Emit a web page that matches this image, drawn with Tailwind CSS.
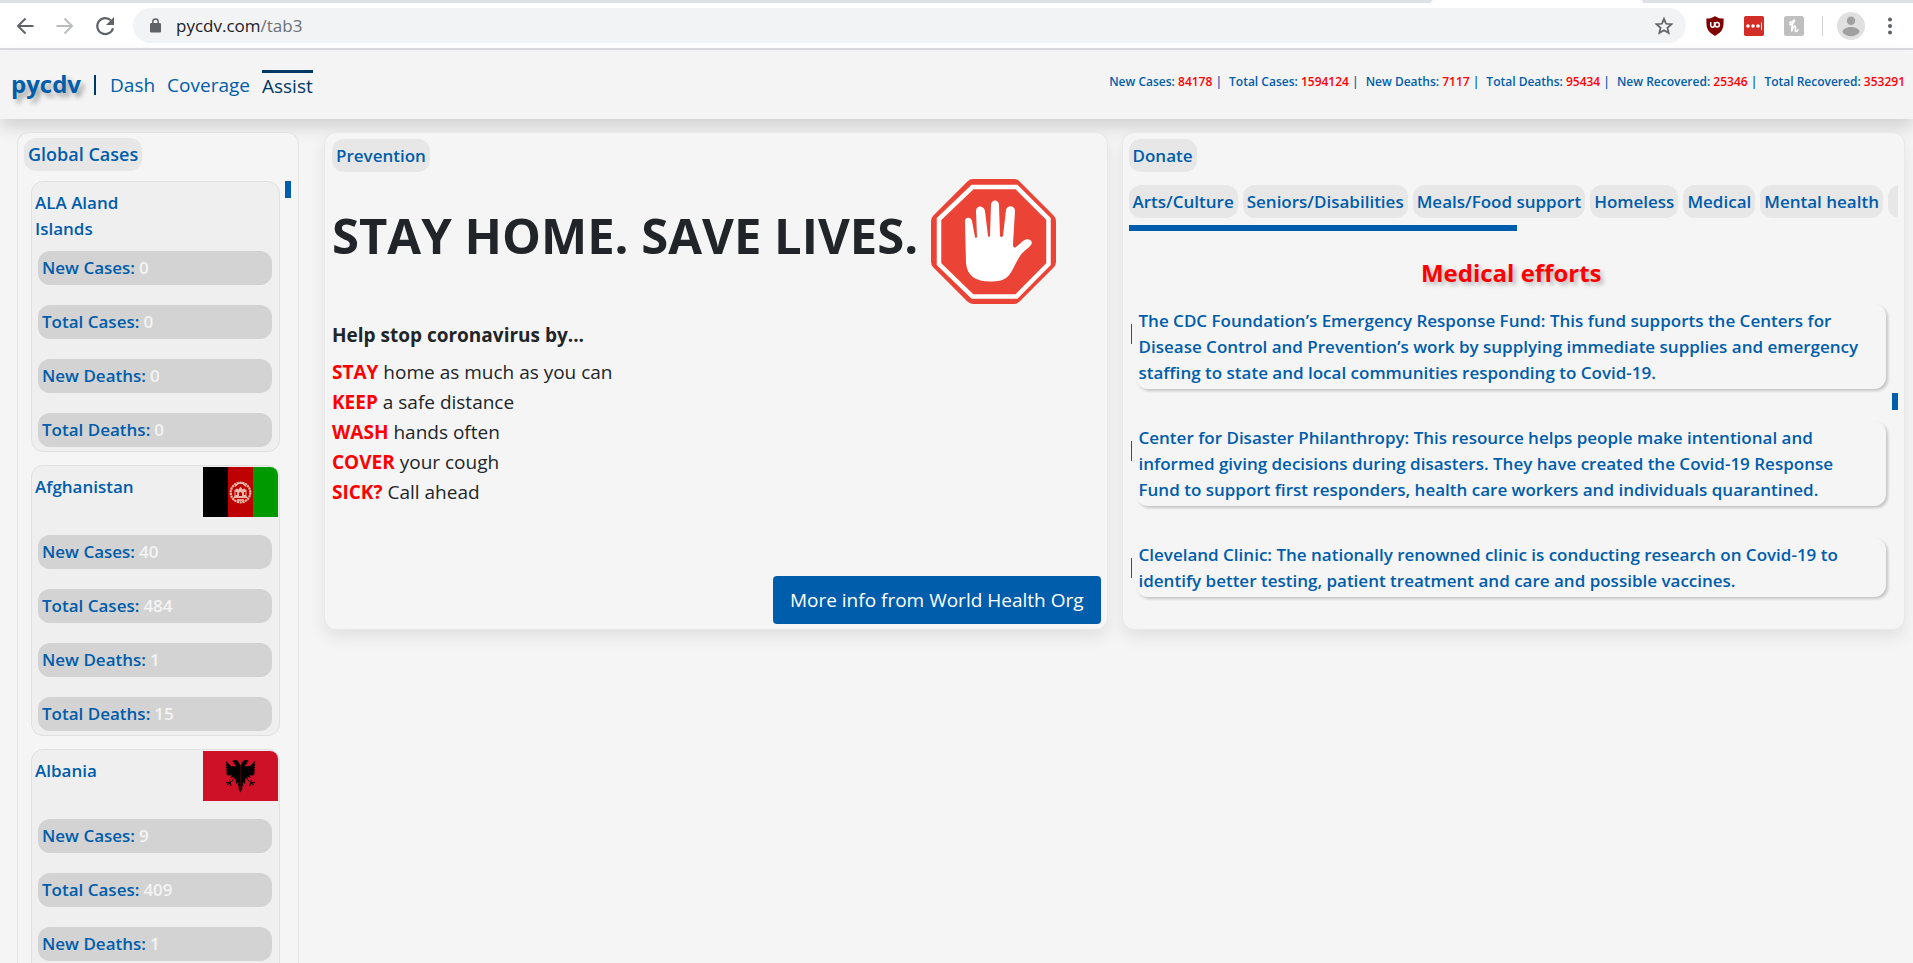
<!DOCTYPE html>
<html lang="en">
<head>
<meta charset="utf-8">
<title>pycdv</title>
<script src="https://cdn.jsdelivr.net/npm/@tailwindcss/browser@4"></script>
</head>
<body class="flex h-screen flex-col overflow-hidden bg-[#f5f5f5] font-['Open_Sans',sans-serif] text-[#212529]">

<!-- Browser toolbar -->
<div class="shrink-0 border-b-2 border-[#dadce0] bg-white">
  <div class="flex h-[3px] bg-[#dee1e6]"><div class="ml-auto mr-[270px] h-[3px] w-[212px] rounded-t-sm bg-white"></div></div>
  <div class="flex h-[45px] items-center">
    <div class="flex w-[133px] shrink-0 items-center gap-4 pl-[13px]">
      <button aria-label="Back"><svg class="size-6" viewBox="0 0 24 24" fill="none" stroke="#5f6368" stroke-width="2"><path d="M20.500 12H5.500M12.500 4.500L5 12l7.500 7.500"/></svg></button>
      <button aria-label="Forward"><svg class="size-6" viewBox="0 0 24 24" fill="none" stroke="#babcbe" stroke-width="2"><path d="M3.500 12h15M11.500 4.500L19 12l-7.500 7.500"/></svg></button>
      <button aria-label="Reload"><svg class="size-6" viewBox="0 0 24 24"><path d="M17.800 6.300A8 8 0 1 0 20 14.200" fill="none" stroke="#5f6368" stroke-width="2.200"/><path d="M21 3v8h-8z" fill="#5f6368"/></svg></button>
    </div>
    <div class="flex h-[35px] grow items-center rounded-full bg-[#f1f3f4] pl-[17px] pr-[12px]">
      <svg class="h-[15px] w-[11px] shrink-0" viewBox="0 0 11 15"><rect x="0" y="5" width="11" height="9.500" rx="1.300" fill="#5f6368"/><path d="M2.800 6V3.600a2.700 2.700 0 0 1 5.400 0V6" fill="none" stroke="#5f6368" stroke-width="1.500"/></svg>
      <div role="textbox" aria-label="Address" class="ml-[15px] grow text-[17px] text-[#202124]">pycdv.com<span class="text-[#6b6f74]">/tab3</span></div>
      <button aria-label="Bookmark"><svg class="size-5" viewBox="0 0 20 20" fill="none" stroke="#5f6368" stroke-width="1.700"><path d="M10 2.800l2.100 5 5.400.45-4.100 3.500 1.250 5.300L10 14.200l-4.650 2.850L6.600 11.750 2.500 8.250l5.400-.45z"/></svg></button>
    </div>
    <div class="flex w-[227px] shrink-0 items-center pl-[20px]">
      <svg class="h-5 w-[18px]" viewBox="0 0 18 20"><path d="M9 0l1 .7C12 2 14.500 2.600 17.600 2.600 17.700 12 17.500 15 9 20 .500 15 .300 12 .400 2.600 3.500 2.600 6 2 8 .700z" fill="#800000"/><path d="M4.700 6v3.300a1.900 1.900 0 0 0 3.800 0V6M8.500 9" fill="none" stroke="#fff" stroke-width="1.500"/><circle cx="11.200" cy="8.700" r="2.200" fill="none" stroke="#fff" stroke-width="1.500"/></svg>
      <svg class="ml-[20px] size-5" viewBox="0 0 20 20"><rect width="20" height="20" rx="1.800" fill="#d32d27"/><g fill="#fff"><circle cx="4" cy="10" r="1.800"/><circle cx="9" cy="10" r="1.800"/><circle cx="14" cy="10" r="1.800"/><rect x="17" y="6.500" width="1" height="7.500"/></g></svg>
      <svg class="ml-[20px] size-5" viewBox="0 0 20 20"><rect width="20" height="20" rx="2.500" fill="#bfbfbf"/><path d="M6 8.800C8.500 8 11.300 5.500 10.300 4.300 8.900 3.500 7.800 8 7.800 15.500 8.300 12 9.500 10 10.800 10.200c1.700.4-.5 5.300 1.200 5.300 1 0 1.500-.8 1.900-1.500M5.800 6.800l1.200-1" fill="none" stroke="#fff" stroke-width="1.700" stroke-linecap="round"/></svg>
      <div class="ml-[18px] h-5 w-px bg-[#cfd1d4]"></div>
      <svg class="ml-[14px] size-[28px]" viewBox="0 0 28 28"><circle cx="14" cy="14" r="14" fill="#e0e0e0"/><circle cx="14" cy="8.700" r="4.200" fill="#a0a0a0"/><path d="M5.500 20c0-3.500 5-5 8.500-5s8.500 1.500 8.500 5c-1.500 2.700-5 4.200-8.500 4.200S7 22.700 5.500 20z" fill="#a0a0a0"/></svg>
      <button aria-label="Menu" class="ml-[23px]"><svg class="h-[18px] w-1" viewBox="0 0 4 18" fill="#5f6368"><circle cx="2" cy="2.500" r="2"/><circle cx="2" cy="9" r="2"/><circle cx="2" cy="15.500" r="2"/></svg></button>
    </div>
  </div>
</div>

<!-- Site header -->
<header class="flex h-[69px] shrink-0 items-center justify-between bg-[#f4f4f4] pl-[11px] pr-2 shadow-[0_8px_16px_rgba(0,0,0,0.15)]">
  <nav class="flex items-center text-[19px] leading-[26px] text-[#005dab]">
    <a href="#" class="pb-[2px] text-[24px] font-bold [text-shadow:4px_4px_5px_rgba(0,0,0,0.35)]">pycdv</a>
    <span class="ml-[13px] h-5 w-[2px] bg-[#003865]"></span>
    <a href="#" class="ml-[14px]">Dash</a>
    <a href="#" class="ml-[12px]">Coverage</a>
    <a href="#" class="ml-[12px] border-t-3 border-[#003865] text-[#003865]">Assist</a>
  </nav>
  <p class="flex gap-[7px] pb-[6px] text-[12px] font-semibold text-[#005dab]">
    <span>New Cases: <b class="font-semibold text-[#ff0000]">84178</b> |</span>
    <span>Total Cases: <b class="font-semibold text-[#ff0000]">1594124</b> |</span>
    <span>New Deaths: <b class="font-semibold text-[#ff0000]">7117</b> |</span>
    <span>Total Deaths: <b class="font-semibold text-[#ff0000]">95434</b> |</span>
    <span>New Recovered: <b class="font-semibold text-[#ff0000]">25346</b> |</span>
    <span>Total Recovered: <b class="font-semibold text-[#ff0000]">353291</b></span>
  </p>
</header>

<main class="flex min-h-0 grow items-start pl-[17px] pr-2 pt-[13px]">

  <!-- Country list -->
  <aside class="mr-[25px] flex h-full w-[282px] shrink-0 flex-col overflow-hidden rounded-t-xl border border-b-0 border-[#e3e3e3] bg-[#f5f5f5] pl-[6px] pt-[5px] font-semibold text-[#005dab]">
    <h2 class="flex h-[33px] shrink-0 items-center self-start rounded-xl bg-[#e7e7e7] px-1 text-[18px]">Global Cases</h2>
    <div class="mt-[10px] flex min-h-0 grow items-start gap-[5px] pl-[7px] text-[17px]">
      <div class="flex w-[249px] flex-col gap-[13px]">
        <section class="h-[271px] rounded-xl border border-[#e0e0e0] bg-[#efefef]">
          <div class="flex h-[69px] justify-between pl-[3px]"><h3 class="w-[110px] pt-2 leading-[26px]">ALA Aland Islands</h3></div>
          <ul class="flex flex-col gap-5 pl-[6px] pr-[7px]">
            <li class="flex h-[34px] items-center gap-1 rounded-xl bg-[#d3d3d3] px-1">New Cases: <span class="text-[#f4f4f4]">0</span></li>
            <li class="flex h-[34px] items-center gap-1 rounded-xl bg-[#d3d3d3] px-1">Total Cases: <span class="text-[#f4f4f4]">0</span></li>
            <li class="flex h-[34px] items-center gap-1 rounded-xl bg-[#d3d3d3] px-1">New Deaths: <span class="text-[#f4f4f4]">0</span></li>
            <li class="flex h-[34px] items-center gap-1 rounded-xl bg-[#d3d3d3] px-1">Total Deaths: <span class="text-[#f4f4f4]">0</span></li>
          </ul>
        </section>
        <section class="h-[271px] rounded-xl border border-[#e0e0e0] bg-[#efefef]">
          <div class="flex h-[69px] justify-between pl-[3px] pr-px pt-px"><h3 class="pt-[7px] leading-[26px]">Afghanistan</h3>
            <svg class="h-[50px] w-[75px] rounded-tr-lg" viewBox="0 0 75 50"><path fill="#000" d="M0 0h25v50H0z"/><path fill="#bf0000" d="M25 0h25v50H25z"/><path fill="#009900" d="M50 0h25v50H50z"/><circle cx="37.500" cy="25.500" r="9.800" fill="none" stroke="#e9b9a8" stroke-width="2.200" stroke-dasharray="2.200 .6"/><path d="M32 19.500q5.500-7 11 0" fill="none" stroke="#f0d0c4" stroke-width="1.200"/><path d="M31.500 29v-6l2.500-1.500 1.500 1q2-5 4 0l1.500-1 2.500 1.500v6l1.500 2h-15z" fill="#e8b7a8"/><path d="M36 29v-3q1.500-2 3 0v3zM32.500 25h1.500v3h-1.500zM41 25h1.500v3H41z" fill="#bf0000"/><path d="M34 33h7" stroke="#f0d0c4" stroke-width="1.500"/></svg></div>
          <ul class="flex flex-col gap-5 pl-[6px] pr-[7px]">
            <li class="flex h-[34px] items-center gap-1 rounded-xl bg-[#d3d3d3] px-1">New Cases: <span class="text-[#f4f4f4]">40</span></li>
            <li class="flex h-[34px] items-center gap-1 rounded-xl bg-[#d3d3d3] px-1">Total Cases: <span class="text-[#f4f4f4]">484</span></li>
            <li class="flex h-[34px] items-center gap-1 rounded-xl bg-[#d3d3d3] px-1">New Deaths: <span class="text-[#f4f4f4]">1</span></li>
            <li class="flex h-[34px] items-center gap-1 rounded-xl bg-[#d3d3d3] px-1">Total Deaths: <span class="text-[#f4f4f4]">15</span></li>
          </ul>
        </section>
        <section class="h-[271px] rounded-xl border border-[#e0e0e0] bg-[#efefef]">
          <div class="flex h-[69px] justify-between pl-[3px] pr-px pt-px"><h3 class="pt-[7px] leading-[26px]">Albania</h3>
            <svg class="h-[50px] w-[75px] rounded-tr-lg" viewBox="0 0 75 50"><path fill="#ce1126" d="M0 0h75v50H0z"/><g id="eagle-half"><path d="M37.500 14.500L35 10c-1.500-1.500-4-1.200-6 .3l3 1-2 1.200c2 .2 3 1 3 3L28 15l-5-5 .5 3.500h-1l1.500 2.500h-1.500l2 2.300h-2l2 2.200h-2l2.500 2h-2.500l3 2 3.500-.2-2 2.700 4-1.500-1.500 3 3-1.500L33 33l2.500-2-1 4.500 1.500-1-.5 3 2 4z"/><path d="M31 28l-4 4-4-.5M26.500 29l1 3 .5 3M24 34l3-2" fill="none" stroke="#000" stroke-width="1"/></g><use href="#eagle-half" transform="matrix(-1 0 0 1 75 0)"/></svg></div>
          <ul class="flex flex-col gap-5 pl-[6px] pr-[7px]">
            <li class="flex h-[34px] items-center gap-1 rounded-xl bg-[#d3d3d3] px-1">New Cases: <span class="text-[#f4f4f4]">9</span></li>
            <li class="flex h-[34px] items-center gap-1 rounded-xl bg-[#d3d3d3] px-1">Total Cases: <span class="text-[#f4f4f4]">409</span></li>
            <li class="flex h-[34px] items-center gap-1 rounded-xl bg-[#d3d3d3] px-1">New Deaths: <span class="text-[#f4f4f4]">1</span></li>
          </ul>
        </section>
      </div>
      <div class="h-[17px] w-[6px] bg-[#005dab]"></div>
    </div>
  </aside>

  <div class="grid grow grid-cols-2 gap-[14px]">
    <!-- Prevention -->
    <section class="flex min-w-0 flex-col rounded-xl border border-[#e8e8e8] bg-[#f5f5f5] px-[6px] pb-[5px] pt-[6px] pl-[7px] shadow-[0_8px_16px_rgba(0,0,0,0.08)]">
      <h2 class="flex h-[33px] items-center self-start rounded-xl bg-[#e7e7e7] px-1 text-[17px] font-semibold text-[#005dab]">Prevention</h2>
      <div class="mt-[7px] flex items-center gap-[13px] whitespace-nowrap">
        <h1 class="pb-[14px] text-[49px] leading-[60px] font-bold">STAY HOME. SAVE LIVES.</h1>
        <svg class="size-[125px] shrink-0" viewBox="0 0 125 125"><path d="M42 3h41q2 0 3.500 1.500l34 34Q122 40 122 42v41q0 2-1.500 3.500l-34 34Q85 122 83 122H42q-2 0-3.500-1.500l-34-34Q3 85 3 83V42q0-2 1.500-3.500l34-34Q40 3 42 3z" fill="#eb4335" stroke="#eb4335" stroke-width="6" stroke-linejoin="round"/><path d="M41.500 8h44L117.500 40v45L85.500 117.500h-44L8 85V40z" fill="none" stroke="#fff" stroke-width="4.500"/><path d="M34 43C33 38 40 37 41 42l3 16q1 2 2 0l-1-26c0-6 8-6 9 0l3 25q1 2 2 0l1-31c0-6 8-6 8 0l1 31q1.500 2 3 0l3-26c1-5 9-5 9 1l-2 33q0 5 3 3l7-6c5-4 11 0 8 4-2 3-7 5-11 11-5 8-7 14-10 18-5 7-13 7.500-20 7.500-14 0-23-5.500-24-18.500z" fill="#fff"/></svg>
      </div>
      <h3 class="mt-4 text-[19px] leading-[30px] font-bold">Help stop coronavirus by...</h3>
      <ul class="mt-[7px] text-[19px] leading-[30px]">
        <li><b class="text-[#ff0000]">STAY</b> home as much as you can</li>
        <li><b class="text-[#ff0000]">KEEP</b> a safe distance</li>
        <li><b class="text-[#ff0000]">WASH</b> hands often</li>
        <li><b class="text-[#ff0000]">COVER</b> your cough</li>
        <li><b class="text-[#ff0000]">SICK?</b> Call ahead</li>
      </ul>
      <button class="mt-[69px] h-12 self-end rounded bg-[#005dab] px-[17px] text-[19px] text-white">More info from World Health Org</button>
    </section>

    <!-- Donate -->
    <section class="flex min-w-0 flex-col rounded-xl border border-[#e8e8e8] bg-[#f5f5f5] px-[6px] pt-[6px] text-[17px] font-semibold text-[#005dab] shadow-[0_8px_16px_rgba(0,0,0,0.08)]">
      <h2 class="flex h-[33px] items-center self-start rounded-xl bg-[#e7e7e7] px-1">Donate</h2>
      <div class="mt-[13px] flex h-[33px] gap-[5px] overflow-hidden whitespace-nowrap">
        <button class="shrink-0 rounded-xl bg-[#e7e7e7] px-1">Arts/Culture</button>
        <button class="shrink-0 rounded-xl bg-[#e7e7e7] px-1">Seniors/Disabilities</button>
        <button class="shrink-0 rounded-xl bg-[#e7e7e7] px-1">Meals/Food support</button>
        <button class="shrink-0 rounded-xl bg-[#e7e7e7] px-1">Homeless</button>
        <button class="shrink-0 rounded-xl bg-[#e7e7e7] px-1">Medical</button>
        <button class="shrink-0 rounded-xl bg-[#e7e7e7] px-1">Mental health</button>
        <div class="w-10 shrink-0 rounded-xl bg-[#e7e7e7]"></div>
      </div>
      <div class="mt-[7px] h-[6px] w-[388px] bg-[#005dab]"></div>
      <div class="mt-[26px] flex items-start">
        <div class="grow">
          <h3 class="pl-2 text-center text-[24px] leading-8 font-bold text-[#ff0000] [text-shadow:3px_3px_4px_rgba(0,0,0,0.25)]">Medical efforts</h3>
          <ul class="mt-[15px] flex flex-col gap-8 leading-[26px]">
            <li class="flex gap-1 pl-[2px]"><span class="mt-5 h-5 w-px shrink-0 bg-[#005dab]"></span><p class="grow rounded-xl pl-[3px] pr-3 pb-[3px] pt-1 shadow-[2px_2px_3px_rgba(0,0,0,0.2)]">The CDC Foundation’s Emergency Response Fund: This fund supports the Centers for Disease Control and Prevention’s work by supplying immediate supplies and emergency staffing to state and local communities responding to Covid-19.</p></li>
            <li class="flex gap-1 pl-[2px]"><span class="mt-5 h-5 w-px shrink-0 bg-[#005dab]"></span><p class="grow rounded-xl pl-[3px] pr-3 pb-[3px] pt-1 shadow-[2px_2px_3px_rgba(0,0,0,0.2)]">Center for Disaster Philanthropy: This resource helps people make intentional and informed giving decisions during disasters. They have created the Covid-19 Response Fund to support first responders, health care workers and individuals quarantined.</p></li>
            <li class="flex gap-1 pl-[2px]"><span class="mt-5 h-5 w-px shrink-0 bg-[#005dab]"></span><p class="grow rounded-xl pl-[3px] pr-3 pb-[3px] pt-1 shadow-[2px_2px_3px_rgba(0,0,0,0.2)]">Cleveland Clinic: The nationally renowned clinic is conducting research on Covid-19 to identify better testing, patient treatment and care and possible vaccines.</p></li>
          </ul>
        </div>
        <div class="ml-[6px] mt-[136px] h-[17px] w-[6px] shrink-0 bg-[#005dab]"></div>
      </div>
    </section>
  </div>
</main>
</body>
</html>
